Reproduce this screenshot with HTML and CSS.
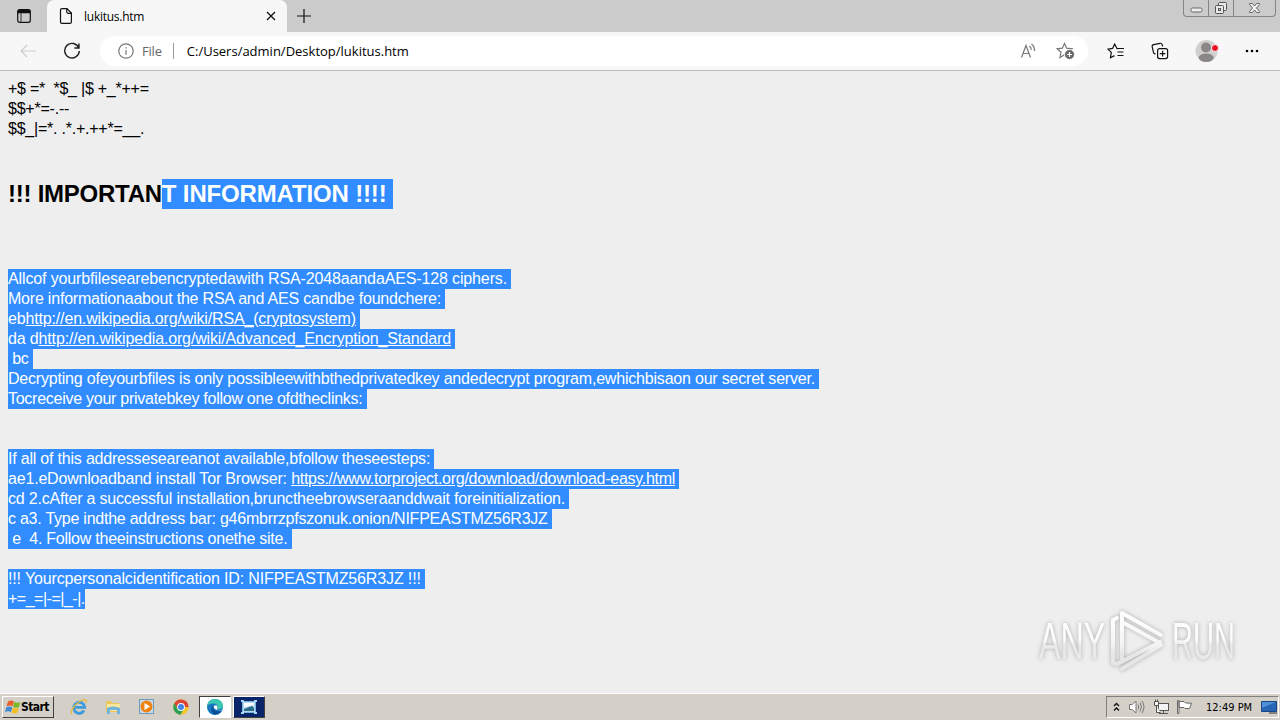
FILE: index.html
```html
<!DOCTYPE html>
<html lang="en">
<head>
  <meta charset="UTF-8">
  <title>lukitus.htm</title>
  <link rel="stylesheet" href="styles.css">
</head>
<body>

<div class="tabstrip">
  <svg class="tab-menu" width="16" height="16" viewBox="0 0 16 16"><rect x="1.7" y="1.7" width="12.6" height="12.6" rx="2" fill="none" stroke="#111" stroke-width="1.2"/><path d="M1.5 5.3V3.5a2 2 0 0 1 2-2h9a2 2 0 0 1 2 2v1.800z" fill="#111"/><path d="M5 5v9" stroke="#333"/></svg>
  <div class="tab">
    <svg width="14" height="18" viewBox="0 0 14 18" fill="none" stroke="#111" stroke-width="1.2"><path d="M3 1.600h5l4.400 4.500v8.800a1.500 1.500 0 0 1-1.500 1.500H3a1.500 1.500 0 0 1-1.500-1.500V3.100A1.500 1.500 0 0 1 3 1.600zM7.800 1.600v3.500a1.200 1.200 0 0 0 1.200 1.200h3.400"/></svg>
    <span class="tab-title">lukitus.htm</span>
    <svg width="10" height="10" viewBox="0 0 10 10" stroke="#111" stroke-width="1.3"><path d="M1 1l8 8M9 1L1 9"/></svg>
  </div>
  <svg class="new-tab" width="16" height="16" viewBox="0 0 16 16" stroke="#111" stroke-width="1.2"><path d="M8 1v14M1 8h14"/></svg>
  <div class="window-buttons">
    <div class="wb"><svg width="13" height="6" viewBox="0 0 13 6"><rect x="1" y="1" width="11" height="4" rx="1.5" fill="#eee" stroke="#666"/></svg></div>
    <div class="wb"><svg width="14" height="14" viewBox="0 0 14 14" fill="#e8e8e8" stroke="#555"><rect x="4.500" y="1.500" width="8" height="8" rx="1"/><rect x="1.500" y="4.500" width="8" height="8" rx="1"/><rect x="4.500" y="7.500" width="2" height="2"/></svg></div>
    <div class="wb close"><svg width="13" height="12" viewBox="0 0 13 12"><path d="M1.500 1.500h3l2 2.500 2-2.500h3v1L8.500 6l3 3.500v1h-3l-2-2.500-2 2.500h-3v-1l3-3.500-3-3.500z" fill="#eee" stroke="#666"/></svg></div>
  </div>
</div>

<div class="toolbar">
  <svg class="back" width="18" height="16" viewBox="0 0 18 16" fill="none" stroke="#ccc" stroke-width="1.2"><path d="M17 8H2M8 2L2 8l6 6"/></svg>
  <svg class="reload" width="18" height="18" viewBox="0 0 18 18" fill="none" stroke="#222" stroke-width="1.4"><path d="M15.800 6A7.300 7.300 0 1 0 16.300 9M16 1.500V6h-4.600"/></svg>
  <div class="address">
    <svg class="info" width="16" height="16" viewBox="0 0 16 16" fill="none" stroke="#777" stroke-width="1.2"><circle cx="8" cy="8" r="7.200"/><path d="M8 7v4.700M8 4.200v1.300"/></svg>
    <span class="scheme">File</span>
    <span class="sep"></span>
    <span class="url">C:/Users/admin/Desktop/lukitus.htm</span>
    <svg class="read" width="18" height="16" viewBox="0 0 18 16" fill="none" stroke="#777" stroke-width="1.2"><path d="M1.500 14.500L6 2.500l4.500 12M3.300 10.500h5.600M9.500 3q1.800 1.500 1.700 4M11.500 1q3.300 2.500 3 7"/></svg>
    <svg class="fav" width="19" height="18" viewBox="0 0 19 18"><path d="M8.500 1.500l2.100 4.700 5.400.6-4 3.500 1 5-4.500-2.600L4 15.500l1-5.300-3.800-3.400 5.100-.6z" fill="none" stroke="#777" stroke-width="1.2"/><circle cx="13.500" cy="12.500" r="5" fill="#666" stroke="#fff"/><path d="M13.500 10v5M11 12.500h5" stroke="#fff" stroke-width="1.2"/></svg>
  </div>
  <svg class="favorites" width="18" height="16" viewBox="0 0 18 16" fill="none" stroke="#111" stroke-width="1.2"><path d="M11.500 5.600L9.900 5.400 7.700 1 5.500 5.400 1 6.100l3.300 3.300-.8 5.300 4-2.100M11.500 5.500h5.500M10.500 9h6M10.500 12.500h6"/></svg>
  <svg class="collections" width="18" height="18" viewBox="0 0 18 18" fill="none" stroke="#111" stroke-width="1.2"><rect x="6.600" y="6.600" width="10" height="10" rx="2"/><path d="M11.600 8.800v5.600M8.800 11.600h5.600M4.500 12.300L3 11.200a2 2 0 0 1-.7-1.600L1.200 4.900a2 2 0 0 1 1.600-2.300L9 1.300a2 2 0 0 1 2.200 1.400l.4 1.700"/></svg>
  <svg class="profile" width="24" height="24" viewBox="0 0 24 24"><circle cx="11.500" cy="12" r="11" fill="#d2d0ce"/><circle cx="11" cy="8.500" r="5" fill="#8a8886"/><ellipse cx="11.200" cy="18.800" rx="7.500" ry="4.200" fill="#8a8886"/><circle cx="20" cy="9" r="3.500" fill="#e81123" stroke="#f7f7f7"/></svg>
  <svg class="more" width="14" height="4" viewBox="0 0 14 4"><circle cx="2" cy="2" r="1.300"/><circle cx="7" cy="2" r="1.300"/><circle cx="12" cy="2" r="1.300"/></svg>
</div>

<div class="page">
  <div class="line l1">+$ =*&nbsp; *$_ |$ +_*++=</div>
  <div class="line l2">$$+*=-.--</div>
  <div class="line l3">$$_|=*. .*.+.++*=__.</div>
  <h2>!!! IMPORTAN<span class="sel">T INFORMATION !!!!&nbsp;</span></h2>
  <div class="block">
    <div class="line l4"><span class="sel">Allcof yourbfilesearebencryptedawith RSA-2048aandaAES-128 ciphers.&nbsp;</span></div>
    <div class="line l5"><span class="sel">More informationaabout the RSA and AES candbe foundchere:&nbsp;</span></div>
    <div class="line l6"><span class="sel">eb<u>http://en.wikipedia.org/wiki/RSA_(cryptosystem)</u>&nbsp;</span></div>
    <div class="line l7"><span class="sel">da d<u>http://en.wikipedia.org/wiki/Advanced_Encryption_Standard</u>&nbsp;</span></div>
    <div class="line l8"><span class="sel">&nbsp;bc&nbsp;</span></div>
    <div class="line l9"><span class="sel">Decrypting ofeyourbfiles is only possibleewithbthedprivatedkey andedecrypt program,ewhichbisaon our secret server.&nbsp;</span></div>
    <div class="line l10"><span class="sel">Tocreceive your privatebkey follow one ofdtheclinks:&nbsp;</span></div>
  </div>
  <div class="block steps">
    <div class="line l11"><span class="sel">If all of this addresseseareanot available,bfollow theseesteps:&nbsp;</span></div>
    <div class="line l12"><span class="sel">ae1.eDownloadband install Tor Browser: <u>https://www.torproject.org/download/download-easy.html</u>&nbsp;</span></div>
    <div class="line l13"><span class="sel">cd 2.cAfter a successful installation,brunctheebrowseraanddwait foreinitialization.&nbsp;</span></div>
    <div class="line l14"><span class="sel">c a3. Type indthe address bar: g46mbrrzpfszonuk.onion/NIFPEASTMZ56R3JZ&nbsp;</span></div>
    <div class="line l15"><span class="sel">&nbsp;e&nbsp; 4. Follow theeinstructions onethe site.&nbsp;</span></div>
  </div>
  <div class="block ident">
    <div class="line l16"><span class="sel">!!! Yourcpersonalcidentification ID: NIFPEASTMZ56R3JZ !!!&nbsp;</span></div>
    <div class="line l17"><span class="sel">+=_=|-=|_-|.</span></div>
  </div>

  <div class="watermark">
    <div class="word"><span>ANY</span></div>
    <svg width="56" height="64" viewBox="0 0 56 64" fill="none" stroke="url(#fade)" stroke-width="4" stroke-linejoin="round" stroke-linecap="round">
      <defs><linearGradient id="fade" gradientUnits="userSpaceOnUse" x1="0" y1="0" x2="0" y2="64"><stop offset=".2" stop-color="#fdfdfd"/><stop offset=".55" stop-color="#f4f4f4"/><stop offset=".7" stop-color="#e6e6e6"/></linearGradient></defs>
      <path d="M8 9L4 11v43l4 1L51 33M13 50V4l39 22M13 13l36 20M13 60l39-24"/>
    </svg>
    <div class="word"><span class="run">RUN</span></div>
  </div>
</div>

<div class="taskbar">
  <div class="start">
    <svg width="16" height="16" viewBox="0 0 16 16"><path d="M3 2.500q3-2 6 0L7.600 7.300q-3-1.500-6 0z" fill="#e8602c"/><path d="M9.500 2.800q3 1.700 6 0L14 7.900q-3 1.600-6 0z" fill="#79b829"/><path d="M1.300 8.200q3-1.600 6 0L6 13q-3-1.600-6 0z" fill="#3f8bd8"/><path d="M7.800 8.800q3 1.600 6 0l-1.400 5q-3 1.600-6 0z" fill="#f5bd20"/></svg>
    <span>Start</span>
  </div>
  <div class="task ie"><svg width="18" height="18" viewBox="0 0 18 18" fill="none"><path d="M14 12.500a5.500 5.500 0 1 1 .7-3.200H5" stroke="#3d9bdc" stroke-width="2.800"/><path d="M2 16c-3-2 4-12 11-14 3-.8 4 .5 3 3" stroke="#e7b83a" stroke-width="1.300"/></svg></div>
  <div class="task"><svg width="18" height="18" viewBox="0 0 18 18"><path d="M2 3h5l1 2h7v9H2z" fill="#e9c75a"/><path d="M3 6h13v7H3z" fill="#f8e69b"/><path d="M3 10q6-3 13 0v6h-3v-4H6v4H3z" fill="#72b5dc"/></svg></div>
  <div class="task"><svg width="18" height="18" viewBox="0 0 18 18"><rect x="1.500" y="1.500" width="14" height="14" fill="#c9dced" stroke="#6d9abd"/><circle cx="8.500" cy="8.500" r="6" fill="#ef8312"/><path d="M6.500 5l5.500 3.500L6.500 12z" fill="#fff"/></svg></div>
  <div class="task"><svg width="18" height="18" viewBox="0 0 18 18"><circle cx="9" cy="9" r="7.700" fill="#f5c52b"/><path d="M9 9H16.600A7.700 7.700 0 0 0 2.300 5.200L5.600 11z" fill="#dc4437"/><path d="M2.300 5.200A7.700 7.700 0 0 0 8.500 16.700L12 10.800 5.700 11z" fill="#2ca052"/><circle cx="9" cy="9" r="3.900" fill="#fff"/><circle cx="9" cy="9" r="3" fill="#4285e8"/></svg></div>
  <div class="task active"><svg width="18" height="18" viewBox="0 0 18 18"><circle cx="9" cy="9" r="8" fill="#1578c2"/><path d="M1.200 8C2 3.500 5 1 9 1c5 0 8 3.500 8 6.800 0 3-3 4.200-6 3.200 1.500-2 .5-5-3-5.500C5 5.200 2.500 6 1.200 8z" fill="#3cc7b0"/><path d="M7 8c-.5 4 3.500 6.500 8.500 4.500-1.500 2.500-3.800 4-6.500 4C5 16 4 10 7 8z" fill="#0d4f96"/><path d="M8.200 7.500c-1.500 3 2 5.500 8 4.200L18 11c-2 2-7 1.500-7 0 .8-1 .5-3-.5-3.500z" fill="#fff"/></svg></div>
  <div class="task navy"><svg width="18" height="16" viewBox="0 0 18 16"><rect x="2.500" y="2.500" width="13" height="11" fill="#b9d9ee" stroke="#79b8e4"/><path d="M4 10l8-3 2 2v3H4z" fill="#286b8b"/><path d="M4 4h10v2L4 8z" fill="#fff"/><path d="M1 1h3v2H1zM14 1h3v2h-3zM1 13h3v2H1zM14 13h3v2h-3z" fill="#a6d4f5"/></svg></div>

  <div class="tray">
    <svg class="chevrons" width="7" height="10" viewBox="0 0 7 10" fill="none" stroke="#111" stroke-width="1.4"><path d="M1 4l2.500-2.500L6 4M1 8.500L3.500 6 6 8.500"/></svg>
    <svg class="speaker" width="17" height="16" viewBox="0 0 17 16" fill="#fff" stroke="#777"><path d="M1.500 5.500h2.800L8 2v12l-3.700-3.500H1.500z"/><path d="M10 5.500q1.500 2.500 0 5M12 3.500q3 4.500 0 9M14 2q4 6 0 12" fill="none"/></svg>
    <svg class="network" width="17" height="16" viewBox="0 0 17 16" fill="#f4f4f4" stroke="#555"><rect x="5.500" y="4.500" width="10" height="7"/><path d="M6 14.500h9M10.500 11.500v3M1.500 2.500h4v4h-4zM2.500.5v2M4.500.5v2M3.500 6.500v7h4"/></svg>
    <svg class="flag" width="17" height="16" viewBox="0 0 17 16" fill="#fff" stroke="#666"><path d="M1.500 1.500H3v13H1.500zM3 2.500h5l1.500 1.500 6 .2-2 5.300H9l-1-1H3z"/></svg>
    <span class="clock">12:49 PM</span>
    <svg class="desktop" width="16" height="13" viewBox="0 0 16 13"><path d="M.5.5h15v10H.5z" fill="#2865b5" stroke="#174584"/><path d="M1 1h14L1 7z" fill="#4f91d8"/><path d="M8 12h8" stroke="#333"/></svg>
  </div>
</div>

</body>
</html>
```
FILE: styles.css
```css
* {
  box-sizing: border-box;
}

body {
  margin: 0;
  width: 1280px;
  height: 720px;
  overflow: hidden;
  display: flex;
  flex-direction: column;
  background: #eee;
  font-family: "Liberation Sans", Arial, sans-serif;
}

svg {
  display: block;
  flex-shrink: 0;
}

/* tabs */
.tabstrip {
  height: 32px;
  display: flex;
  align-items: center;
  background: #cbcbcb;
  flex-shrink: 0;
}

.tab-menu {
  margin-left: 16px;
}

.tab {
  width: 240px;
  height: 32px;
  margin-left: 15px;
  padding: 0 11px 0 12px;
  display: flex;
  align-items: center;
  background: #f7f7f7;
  border-radius: 7px 7px 0 0;
}

.tab-title {
  flex: 1;
  margin-left: 11px;
  font: 12px "Open Sans", sans-serif;
  letter-spacing: -0.25px;
}

.new-tab {
  margin-left: 9px;
}

.window-buttons {
  height: 17px;
  margin-left: auto;
  margin-right: 4px;
  align-self: flex-start;
  display: flex;
  border: 1px solid #858585;
  border-top: none;
  border-radius: 0 0 4px 4px;
}

.wb {
  width: 25px;
  display: flex;
  align-items: center;
  justify-content: center;
  border-right: 1px solid #858585;
}

.wb:first-child {
  padding-top: 4px;
}

.close {
  width: 41px;
  border-right: none;
}

/* toolbar */
.toolbar {
  height: 39px;
  display: flex;
  align-items: center;
  background: #f7f7f7;
  border-bottom: 1px solid #bdbdbd;
  flex-shrink: 0;
}

.back {
  margin-left: 19px;
}

.reload {
  margin-left: 26px;
}

.address {
  width: 988px;
  height: 30px;
  margin-left: 19px;
  padding: 0 13px 0 18px;
  display: flex;
  align-items: center;
  background: #fff;
  border-radius: 15px;
  font: 13px "Open Sans", sans-serif;
}

.scheme {
  margin-left: 8px;
  color: #666;
  letter-spacing: -0.2px;
}

.sep {
  width: 1px;
  height: 16px;
  margin: 0 13px 0 11px;
  background: #999;
}

.url {
  flex: 1;
}

.fav {
  margin-left: 18px;
}

.favorites {
  margin-left: 19px;
}

.collections {
  margin-left: 26px;
}

.profile {
  margin-left: 26px;
}

.more {
  margin-left: 26px;
}

/* page */
.page {
  position: relative;
  flex: 1;
  padding: 8px;
  font-size: 16px;
}

.line {
  height: 20px;
  line-height: 20px;
  white-space: nowrap;
}

h2 {
  height: 30px;
  line-height: 30px;
  margin: 40px 0 60px;
  font-size: 24px;
  letter-spacing: -0.25px;
  white-space: nowrap;
}

.sel {
  display: inline-block;
  background: #308cff;
  color: #fff;
}

h2 .sel {
  letter-spacing: -0.16px;
}

.l1 { letter-spacing: -0.24px; }
.l2 { letter-spacing: -0.22px; }
.l3 { letter-spacing: -0.23px; }
.l4 { letter-spacing: -0.134px; }
.l5 { letter-spacing: -0.207px; }
.l6 { letter-spacing: -0.16px; }
.l7 { letter-spacing: -0.145px; }
.l8 { letter-spacing: -0.25px; }
.l9 { letter-spacing: -0.2px; }
.l10 { letter-spacing: -0.264px; }
.l11 { letter-spacing: -0.203px; }
.l12 { letter-spacing: -0.19px; }
.l12 u { letter-spacing: -0.28px; }
.l13 { letter-spacing: -0.2px; }
.l14 { letter-spacing: -0.24px; }
.l15 { letter-spacing: -0.245px; }
.l16 { letter-spacing: -0.138px; }
.l17 { letter-spacing: -0.5px; }

.steps {
  margin-top: 40px;
}

.ident {
  margin-top: 20px;
}

.watermark {
  position: absolute;
  left: 1039px;
  top: 538px;
  display: flex;
  align-items: center;
  gap: 7px;
  font: 52px/64px "Liberation Sans", sans-serif;
  filter: drop-shadow(0 0 2px #aaa);
}

.word {
  width: 63px;
}

.word span {
  display: inline-block;
  transform: scaleX(0.62);
  transform-origin: left;
  background: linear-gradient(#fdfdfd 48%, #e9e9e9 56%);
  -webkit-background-clip: text;
  background-clip: text;
  color: transparent;
}

.word .run {
  transform: scaleX(0.56);
}

/* taskbar */
.taskbar {
  height: 27px;
  display: flex;
  align-items: center;
  background: #d4d0c8;
  border-top: 1px solid #fff;
  flex-shrink: 0;
}

.start {
  width: 52px;
  height: 22px;
  margin: 0 9px 0 2px;
  padding-left: 2px;
  display: flex;
  align-items: center;
  border: 1px solid;
  border-color: #fff #404040 #404040 #fff;
  font: bold 12px "DejaVu Sans Condensed", "DejaVu Sans", sans-serif;
  letter-spacing: -0.6px;
}

.task {
  width: 32px;
  height: 22px;
  margin-right: 2px;
  display: flex;
  align-items: center;
  justify-content: center;
}

.active {
  background: #fff;
  border: 1px solid;
  border-color: #404040 #fff #fff #404040;
}

.navy {
  background: #0a246a;
  border: 1px solid;
  border-color: #fff #404040 #404040 #fff;
}

.tray {
  width: 173px;
  height: 22px;
  margin-left: auto;
  margin-right: 1px;
  padding-left: 6px;
  display: flex;
  align-items: center;
  border: 1px solid;
  border-color: #808080 #fff #fff #808080;
}

.speaker {
  margin-left: 8px;
}

.network {
  margin-left: 8px;
}

.flag {
  margin-left: 6px;
}

.clock {
  flex: 1;
  margin-left: 13px;
  font: 11px "DejaVu Sans Condensed", "DejaVu Sans", sans-serif;
}

.desktop {
  margin-right: 1px;
}
```
